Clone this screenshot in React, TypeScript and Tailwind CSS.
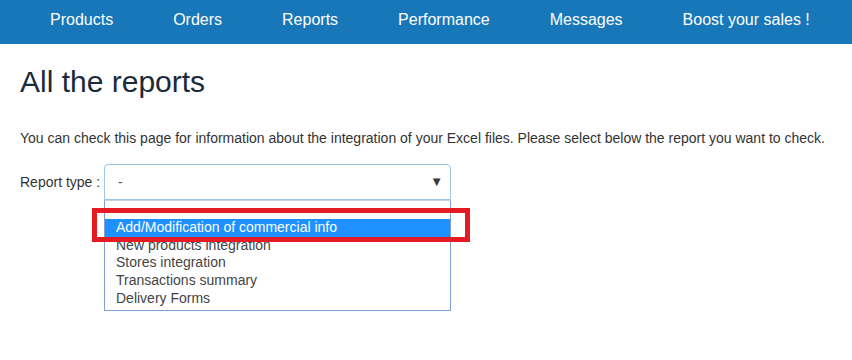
import React from 'react';

const navItems = ['Products', 'Orders', 'Reports', 'Performance', 'Messages', 'Boost your sales !'];

const reportTypes = [
    '',
    'Add/Modification of commercial info',
    'New products integration',
    'Stores integration',
    'Transactions summary',
    'Delivery Forms',
];

const NavBar: React.FC = () => (
    <nav className="bg-[#1877b8] h-[44px] flex items-center pl-[20px]">
        {navItems.map((item) => (
            <a key={item} className="px-[30px] text-white text-[16px] leading-[20px] pb-[5px] cursor-pointer">
                {item}
            </a>
        ))}
    </nav>
);

const ReportSelect: React.FC = () => (
    <div className="relative w-[347px]">
        <div className="h-[36px] border border-[#9cc5ea] rounded-t-[4px] flex items-center justify-between pl-[13px] pr-[7px] text-[14px] text-[#555]">
            <span>-</span>
            <span className="text-[13px] text-[#3a3a3a]">▼</span>
        </div>
        <ul className="border border-[#7f9fd6] border-t-[#c8d4e6] bg-white pb-[2px] text-[14px] leading-[17.75px] text-[#444]">
            {reportTypes.map((label, i) => (
                <li
                    key={i}
                    className={
                        i === 1
                            ? 'h-[17.75px] pl-[11px] bg-[#1e90ff] text-white'
                            : 'h-[17.75px] pl-[11px]'
                    }
                >
                    {label}
                </li>
            ))}
        </ul>
        <div className="absolute left-[-12px] top-[44px] w-[378px] h-[34px] border-[5px] border-[#e41b23] pointer-events-none" />
    </div>
);

export default function App() {
    return (
        <div className="min-h-[360px] bg-white font-['Liberation_Sans',Arial,sans-serif]">
            <NavBar />
            <main className="px-[20px]">
                <h1 className="mt-[21px] text-[30px] leading-[33px] text-[#1a2b3b]">All the reports</h1>
                <p className="mt-[30px] text-[14px] leading-[20px] text-[#333]">
                    You can check this page for information about the integration of your Excel files. Please select below the report you want to check.
                </p>
                <div className="mt-[16px] flex items-start">
                    <label className="w-[84px] h-[36px] flex items-center text-[14px] text-[#333]">Report type :</label>
                    <ReportSelect />
                </div>
            </main>
        </div>
    );
}
